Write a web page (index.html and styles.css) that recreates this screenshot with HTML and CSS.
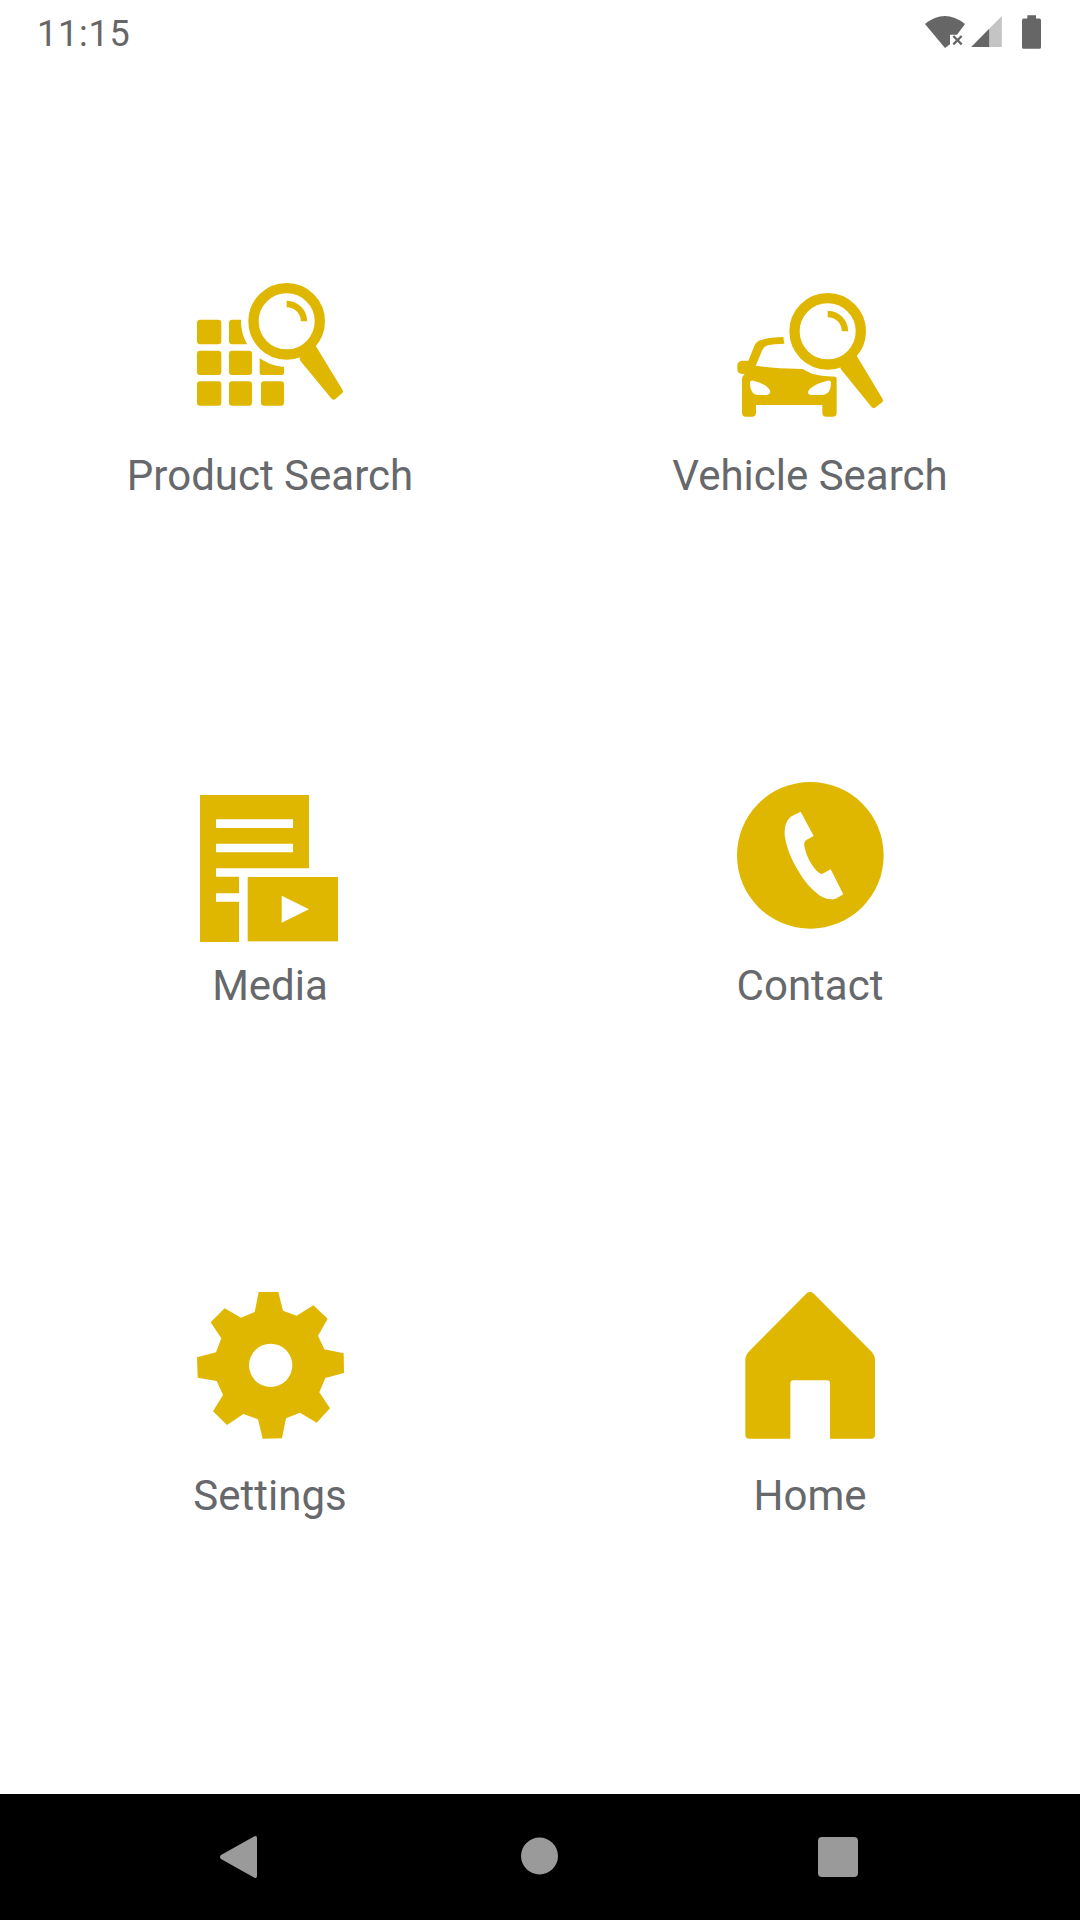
FILE: index.html
```html
<!DOCTYPE html>
<html lang="en">
<head>
    <meta charset="UTF-8">
    <meta name="viewport" content="width=device-width, initial-scale=1.0">
    <title>Home Menu</title>
    <link rel="stylesheet" href="styles.css">
</head>
<body>
    <div class="phone">
        <div class="status-bar">
            <span class="clock">11:15</span>
            <div class="status-icons">
                <svg class="wifi" viewBox="45 42 120 96">
                    <path d="M45 66Q104 18 165 66L141 98H120V127L105 138Z"/>
                    <path class="wifi-x" d="M130 102L155 127M155 102L130 127"/>
                </svg>
                <svg class="signal" viewBox="183 47 92 93">
                    <path class="signal-off" d="M275 47V140H237V85Z"/>
                    <path d="M183 140L237 85V140Z"/>
                </svg>
                <svg class="battery" viewBox="336 42 57 101">
                    <path d="M352 42H378V52H388Q393 52 393 57V138Q393 143 388 143H341Q336 143 336 138V57Q336 52 341 52H352Z"/>
                </svg>
            </div>
        </div>

        <div class="menu">
            <a class="menu-item">
                <svg class="menu-icon" viewBox="75 30 450 450">
                    <rect x="81" y="179" width="73" height="74" rx="9"/>
                    <rect x="177" y="179" width="69" height="74" rx="9"/>
                    <rect x="273" y="179" width="69" height="74" rx="9"/>
                    <rect x="81" y="272" width="73" height="73" rx="9"/>
                    <rect x="177" y="272" width="69" height="73" rx="9"/>
                    <rect x="269" y="272" width="73" height="73" rx="6"/>
                    <rect x="81" y="364" width="73" height="73" rx="9"/>
                    <rect x="177" y="364" width="69" height="73" rx="9"/>
                    <rect x="273" y="364" width="69" height="73" rx="9"/>
                    <circle class="cut" cx="350" cy="184" r="137"/>
                    <circle class="ring" cx="350" cy="184" r="99.5"/>
                    <path class="glint" d="M350 132A52 52 0 0 1 402 184"/>
                    <path class="handle" d="M431 263L511 394L491 411L397 297Z"/>
                </svg>
                <span class="menu-label">Product Search</span>
            </a>
            <a class="menu-item">
                <svg class="menu-icon" viewBox="45 0 450 450">
                    <path fill-rule="evenodd" d="M190 201L193 221Q160 222 143 226Q132 229 127 240L107 287Q140 292 180 295L248 297Q262 305 276 311Q300 318 346 320Q350 320 350 326V428Q350 440 338 440H319Q307 440 307 428V405H108V428Q108 440 96 440H78Q66 440 66 428V330Q66 318 74 312L62 311Q52 309 52 298V285Q54 273 66 272L85 272L104 226Q108 216 122 210Q150 202 190 201ZM90 340Q90 330 100 332Q135 340 148 358Q156 372 140 375H112Q90 372 90 340ZM333 340Q333 330 323 332Q288 340 270 356Q256 372 275 375H308Q333 372 333 340Z"/>
                    <circle class="ring" cx="323" cy="184" r="99.5"/>
                    <path class="glint" d="M323 132A52 52 0 0 1 375 184"/>
                    <path class="handle" d="M405 264L481 391L461 406L370 294Z"/>
                </svg>
                <span class="menu-label">Vehicle Search</span>
            </a>
            <a class="menu-item">
                <svg class="menu-icon" viewBox="45 0 450 450">
                    <path fill-rule="evenodd" d="M60 45H387V265H108V290H177V340H108V365H177V486H60ZM108 118V144H339V118ZM108 191V217H339V191Z"/>
                    <rect x="203" y="291" width="271" height="193"/>
                    <path class="cut" d="M305 347L387 388L305 428Z"/>
                </svg>
                <span class="menu-label">Media</span>
            </a>
            <a class="menu-item">
                <svg class="menu-icon" viewBox="45 30 450 450">
                    <circle cx="271" cy="256" r="220"/>
                    <path class="cut" d="M242 125L281 198L260 209Q251 214 253 228Q258 258 277 286Q292 310 306 312L332 298L370 373L347 386Q325 392 300 377Q262 352 232 298Q200 245 194 195Q191 158 212 140Z"/>
                </svg>
                <span class="menu-label">Contact</span>
            </a>
            <a class="menu-item">
                <svg class="menu-icon" viewBox="45 30 450 450">
                    <path fill-rule="evenodd" d="M236 36H295L309 92L350 107L400 76L443 116L414 167L433 208L491 220L492 279L436 294L418 337L450 385L410 428L360 398L318 415L306 475L248 476L234 418L190 402L141 435L99 394L129 345L110 303L53 293L51 232L108 217L124 175L92 127L134 85L183 113L224 96ZM272 191A65 65 0 1 0 272 321A65 65 0 1 0 272 191Z"/>
                </svg>
                <span class="menu-label">Settings</span>
            </a>
            <a class="menu-item">
                <svg class="menu-icon" viewBox="15 30 450 450">
                    <path d="M230 40Q240 32 250 40L425 215Q435 226 435 240V464Q435 476 423 476H300V310Q300 301 291 301H190Q181 301 181 310V476H58Q46 476 46 464V240Q46 226 56 215Z"/>
                </svg>
                <span class="menu-label">Home</span>
            </a>
        </div>

        <div class="nav-bar">
            <div class="nav-btn">
                <svg viewBox="0 0 60 60"><path d="M44 10.500Q47 9 47 12V50Q47 53 44 51.500L11 33Q9 31 11 29Z"/></svg>
            </div>
            <div class="nav-btn">
                <svg viewBox="0 0 60 60"><circle cx="29.500" cy="30" r="18.500"/></svg>
            </div>
            <div class="nav-btn">
                <svg viewBox="0 0 60 60"><rect x="8" y="11" width="40" height="40" rx="4"/></svg>
            </div>
        </div>
    </div>
</body>
</html>
```

FILE: styles.css
```css
body {
    margin: 0;
    background: #fff;
    font-family: 'Roboto', sans-serif;
}
.phone {
    width: 1080px;
    height: 1920px;
    display: flex;
    flex-direction: column;
    overflow: hidden;
}
.status-bar {
    height: 61px;
    padding: 2px 39px 0 37px;
    display: flex;
    justify-content: space-between;
    align-items: center;
    flex-shrink: 0;
}
.clock {
    margin-top: 2px;
    font-size: 36px;
    color: #666;
    letter-spacing: 0.8px;
}
.status-icons {
    display: flex;
    align-items: center;
    margin-top: -2px;
}
.status-icons svg {
    display: block;
    fill: #666;
}
.wifi {
    width: 40px;
    height: 32px;
}
.wifi-x {
    fill: none;
    stroke: #666;
    stroke-width: 7;
}
.signal {
    width: 31px;
    height: 31px;
    margin-left: 6px;
}
.signal-off {
    fill: #c4c4c4;
}
.battery {
    width: 19px;
    height: 34px;
    margin-left: 20px;
}
.menu {
    flex: 1;
    min-height: 0;
    padding-top: 207px;
    display: grid;
    grid-template-columns: 1fr 1fr;
    grid-template-rows: 510px 510px 1fr;
}
.menu-item {
    display: flex;
    flex-direction: column;
    align-items: center;
}
.menu-icon {
    width: 150px;
    height: 150px;
    fill: #e0b700;
    overflow: visible;
}
.menu-icon .cut {
    fill: #fff;
}
.menu-icon .ring {
    fill: none;
    stroke: #e0b700;
    stroke-width: 31;
}
.menu-icon .glint {
    fill: none;
    stroke: #e0b700;
    stroke-width: 19;
}
.menu-icon .handle {
    stroke: #e0b700;
    stroke-width: 16;
    stroke-linejoin: round;
}
.menu-label {
    margin-top: 33px;
    font-size: 42px;
    line-height: 46px;
    color: #66686b;
}
.nav-bar {
    height: 126px;
    padding-bottom: 2px;
    box-sizing: border-box;
    background: #000;
    display: flex;
    justify-content: center;
    align-items: center;
    flex-shrink: 0;
}
.nav-btn {
    width: 300px;
    display: flex;
    justify-content: center;
}
.nav-btn svg {
    width: 60px;
    height: 60px;
    fill: #9a9a9a;
}
```
